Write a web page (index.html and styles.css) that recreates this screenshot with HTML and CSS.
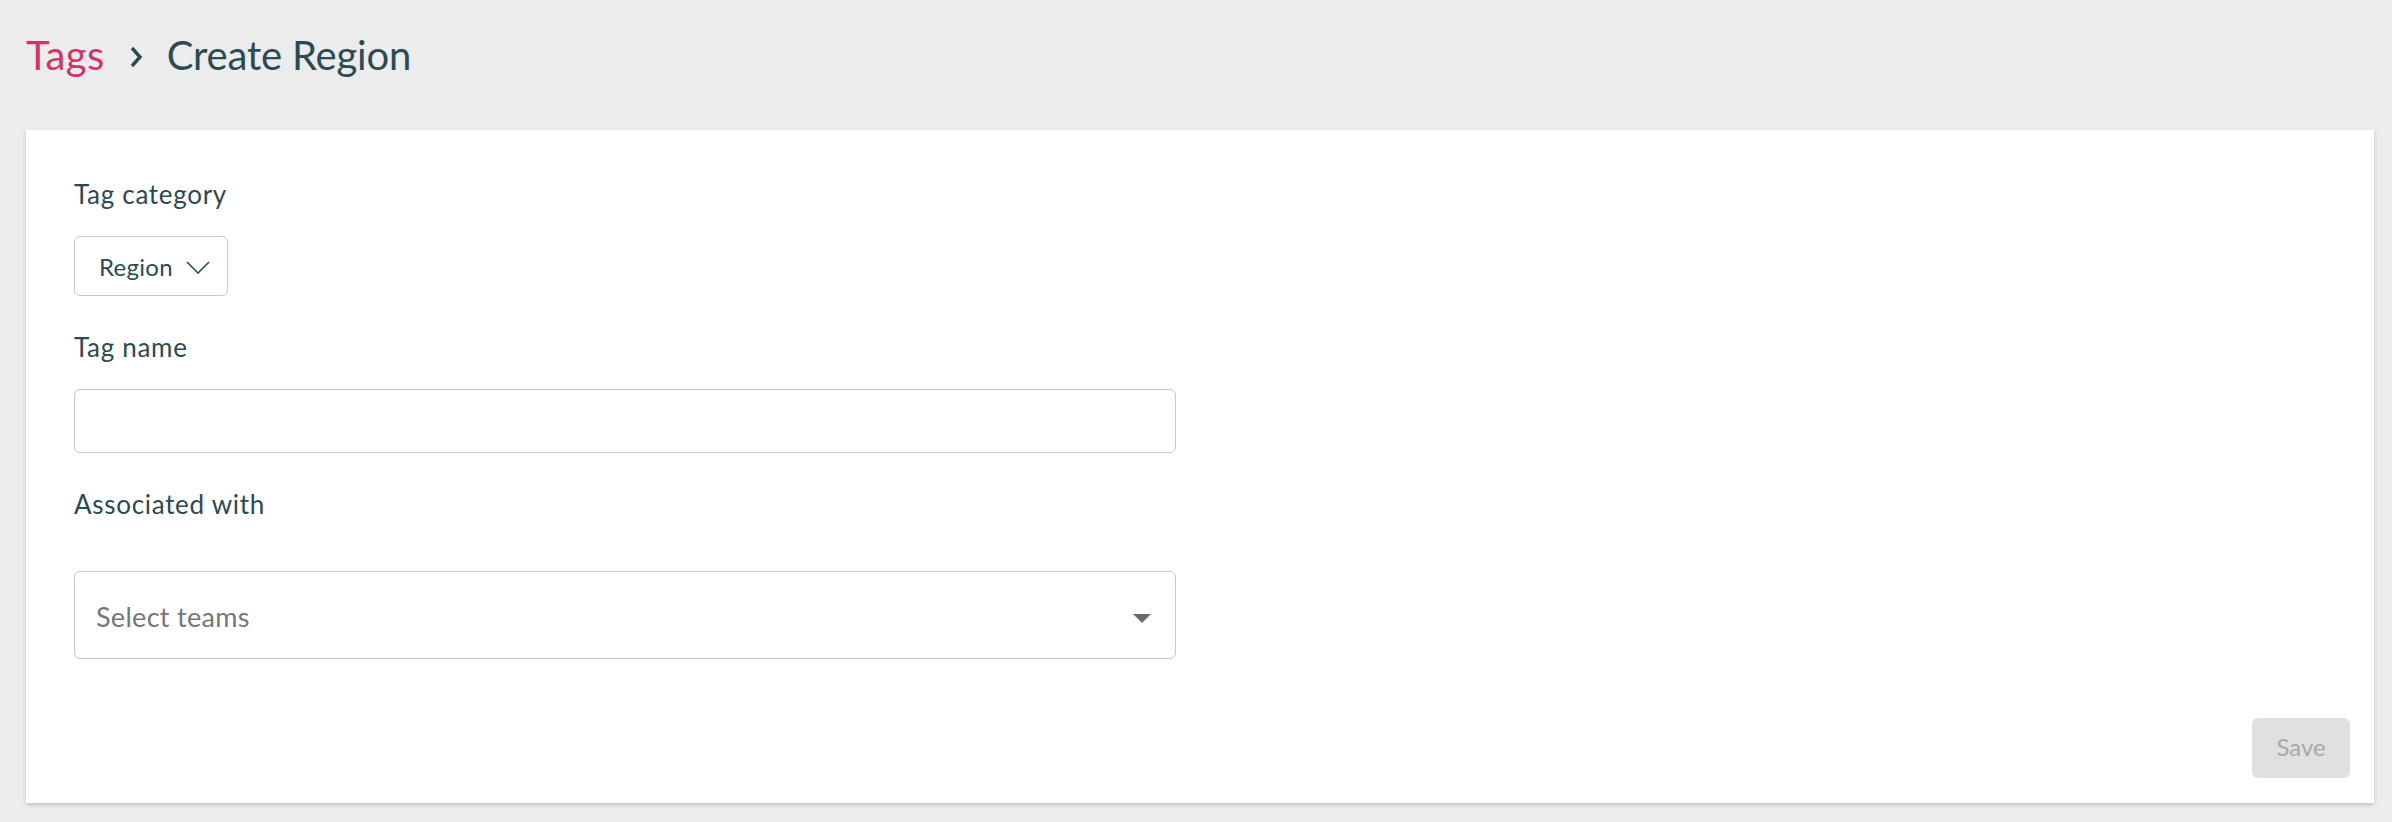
FILE: index.html
```html
<html>
  <head>
  <title>Create Region</title>
  <link rel="stylesheet" href="styles.css">
  </head>
<body>

<div class="crumbs">
  <a class="crumb-link" href="#">Tags</a>
  <svg class="crumb-sep" width="14" height="22" viewBox="0 0 14 22">
    <polyline points="3,2 11,11 3,20" fill="none" stroke="#2c4a52" stroke-width="3.4"/>
  </svg>
  <span class="crumb-current">Create Region</span>
</div>

<div class="card">
  <div class="field">
    <label class="field-label">Tag category</label>
    <div class="picker">
      <span>Region</span>
      <svg class="picker-chevron" width="24" height="13" viewBox="0 0 24 13">
        <polyline points="1,1 12,12 23,1" fill="none" stroke="#2c4a52" stroke-width="1.6"/>
      </svg>
    </div>
  </div>

  <div class="field">
    <label class="field-label">Tag name</label>
    <input class="text-input" type="text">
  </div>

  <div class="field field-wide">
    <label class="field-label">Associated with</label>
    <div class="multi-select">
      <span class="placeholder">Select teams</span>
      <svg class="caret" width="18" height="9" viewBox="0 0 18 9">
        <polygon points="0,0 18,0 9,9" fill="#6b6b6b"/>
      </svg>
    </div>
  </div>

  <div class="card-footer">
    <button class="btn-save" disabled>Save</button>
  </div>
</div>

</body>
</html>
```

FILE: styles.css
```css
body {
 margin: 0;
 background: #ececec;
 font-family: Lato, "Open Sans", sans-serif;
 color: #2c4a52;
}

/* breadcrumb */
.crumbs {
 padding: 31px 26px 0 26px;
 height: 48px;
 font-size: 40px;
 line-height: 48px;
 margin-bottom: 51px;
 display: flex;
 align-items: center;
}
.crumb-link {
 color: #d2336b;
 text-decoration: none;
 letter-spacing: 0.4px;
}
.crumb-sep {
 margin: 4px 24px 0 24px;
}
.crumb-current {
 color: #2c4a52;
 letter-spacing: -0.2px;
}

/* card */
.card {
 margin: 0 18px 0 26px;
 background: #fff;
 box-shadow: 0 2px 4px rgba(0,0,0,0.18);
 padding: 49px 24px 25px 48px;
 display: flex;
 flex-direction: column;
}

.field {
 display: flex;
 flex-direction: column;
 align-items: flex-start;
 margin-bottom: 36px;
}
.field-wide {
 margin-bottom: 59px;
}
.field-label {
 font-size: 26px;
 line-height: 31px;
 margin-bottom: 26px;
 letter-spacing: 0.7px;
}
.field-wide .field-label {
 margin-bottom: 51px;
}

.picker {
 box-sizing: border-box;
 width: 154px;
 height: 60px;
 border: 1px solid #c8c8c8;
 border-radius: 6px;
 padding: 0 17px 0 24px;
 display: flex;
 align-items: center;
 justify-content: space-between;
 font-size: 24px;
 letter-spacing: 0.3px;
}
.picker-chevron {
 margin-top: 2px;
}

.text-input {
 box-sizing: border-box;
 width: 1102px;
 height: 64px;
 border: 1px solid #c8c8c8;
 border-radius: 6px;
 font-family: inherit;
 font-size: 24px;
 padding: 0 20px;
 outline: none;
}

.multi-select {
 box-sizing: border-box;
 width: 1102px;
 height: 88px;
 border: 1px solid #c8c8c8;
 border-radius: 6px;
 padding: 0 24px 0 21px;
 display: flex;
 align-items: center;
 justify-content: space-between;
}
.placeholder {
 font-size: 27px;
 color: #777;
 margin-top: 2px;
 letter-spacing: 0.3px;
}
.caret {
 margin-top: 6px;
}

.card-footer {
 display: flex;
 justify-content: flex-end;
}
.btn-save {
 width: 98px;
 height: 60px;
 padding: 0 0 3px 0;
 border: none;
 border-radius: 6px;
 background: #e0e0e0;
 color: #a9a9a9;
 font-family: inherit;
 font-size: 24px;
}
```
